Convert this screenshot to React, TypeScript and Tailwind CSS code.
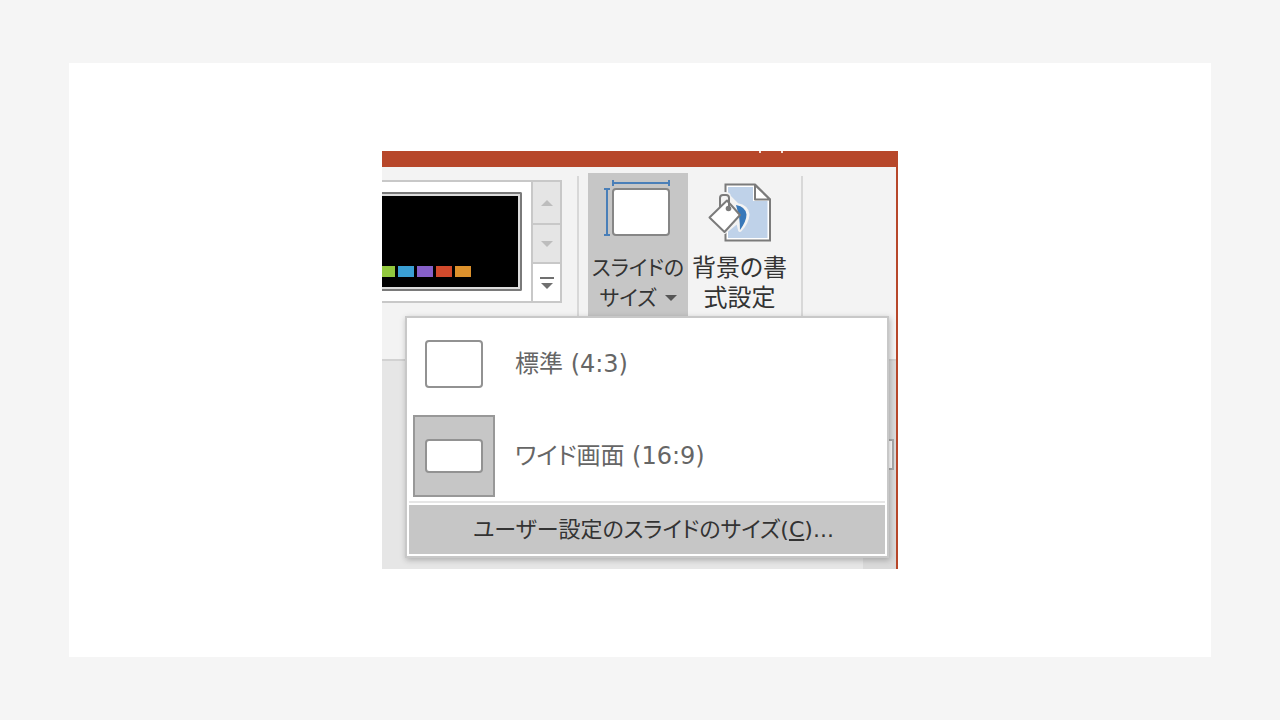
import type { ReactNode } from "react";

const swatches = ["bg-[#92c83e]", "bg-[#3a9fd4]", "bg-[#8660c9]", "bg-[#d24a2c]", "bg-[#dd912c]"];

function SlideSizeIcon() {
  return (
    <svg width="68" height="60" viewBox="0 0 68 60" fill="none" aria-hidden="true">
      <rect x="9" y="10" width="56" height="46" rx="3" fill="#fff" stroke="#868686" strokeWidth="2" />
      <path d="M9 4h56M9 1v6M65 1v6" stroke="#4a7fb8" strokeWidth="2" />
      <path d="M3 10v46M0 10h6M0 56h6" stroke="#4a7fb8" strokeWidth="2" />
    </svg>
  );
}

function FormatBackgroundIcon() {
  return (
    <svg width="64" height="60" viewBox="0 0 64 60" fill="none" aria-hidden="true">
      <path d="M17.5 1.5H47L62 16.5v41H17.5z" fill="#fff" stroke="#7b7b7b" strokeWidth="2" />
      <path d="M20 4h25v14h14.500v37H20z" fill="#bfd2e9" />
      <path d="M47 2v14.500h15z" fill="#fff" stroke="#7b7b7b" strokeWidth="2" strokeLinejoin="round" />
      {/* light halo keeps the bucket apart from the page */}
      <path
        d="M1 34.500L13 22v-8q0-3 4-3t4 3l8 8q10 2 10.500 9.500Q39 39 32 47l-2-9-13.500 11z"
        fill="#f3f3f3"
        stroke="#f3f3f3"
        strokeWidth="4"
        strokeLinejoin="round"
      />
      <path d="M28 22q10 2 10.500 9.500Q38.500 38 32 47q0-6-1-14z" fill="#3878b9" />
      <path d="M1.500 34.500L19 17.500l13 14.500-15.500 17z" fill="#fff" stroke="#7b7b7b" strokeWidth="2" strokeLinejoin="round" />
      <path d="M12 24V15q0-3 3-3h3q3 0 3 3v10" stroke="#7b7b7b" strokeWidth="2" />
      <circle cx="20.500" cy="25.500" r="2.800" fill="#7b7b7b" />
    </svg>
  );
}

function Arrow({ up = false, className }: { up?: boolean; className: string }) {
  return (
    <svg width="12" height="6" viewBox="0 0 12 6" className={className} aria-hidden="true">
      <path d={up ? "M0 6h12L6 0z" : "M0 0h12L6 6z"} fill="currentColor" />
    </svg>
  );
}

function ThemeGallery() {
  return (
    <div className="mt-[7px] flex h-[123px] min-w-0 flex-1 border-y-2 border-r-2 border-[#c8c8c8] bg-white">
      <div className="min-w-0 flex-1 py-2.5">
        <button
          type="button"
          aria-label="テーマ"
          className="flex h-[99px] w-[140px] rounded-r-[2px] border-y-2 border-r-2 border-[#7a7a7a] bg-[#dcdcdc] py-[2px] pr-[2px]"
        >
          <span className="flex h-full w-full items-end gap-[3px] overflow-hidden bg-black pb-2.5">
            {swatches.map((color, i) => (
              <span key={color} className={`h-[11px] ${i === 0 ? "w-[13px]" : "w-4"} ${color}`} />
            ))}
          </span>
        </button>
      </div>
      <div className="flex w-[29px] flex-col border-l-2 border-[#c8c8c8]">
        <button type="button" aria-label="上へ" className="flex h-[43px] items-center justify-center border-b-2 border-[#c8c8c8] bg-[#e5e5e5]">
          <Arrow up className="text-[#bdbdbd]" />
        </button>
        <button type="button" aria-label="下へ" className="flex h-[39px] items-center justify-center border-b-2 border-[#c8c8c8] bg-[#e5e5e5]">
          <Arrow className="text-[#bdbdbd]" />
        </button>
        <button type="button" aria-label="その他" className="flex flex-1 flex-col items-center justify-center gap-1">
          <span className="h-[2px] w-3.5 bg-[#707070]" />
          <Arrow className="text-[#707070]" />
        </button>
      </div>
    </div>
  );
}

function SizeOption({ label, selected = false, children }: { label: string; selected?: boolean; children: ReactNode }) {
  return (
    <button type="button" role="menuitemradio" aria-checked={selected} className="flex w-full items-center gap-5 px-1 text-left text-2xl text-[#666]">
      <span
        className={`flex size-[82px] shrink-0 items-center justify-center border-2 ${
          selected ? "border-[#989898] bg-[#c6c6c6]" : "border-transparent"
        }`}
      >
        {children}
      </span>
      <span className="whitespace-nowrap">{label}</span>
    </button>
  );
}

function SlideSizeMenu() {
  return (
    <div
      role="menu"
      className="absolute top-[149px] right-[7px] left-[23px] z-10 border-2 border-[#c8c8c8] bg-white p-[2px] shadow-[1px_2px_6px_rgba(0,0,0,0.25)]"
    >
      <div className="flex flex-col gap-2.5 pt-[3px] pb-1">
        <SizeOption label="標準 (4:3)">
          <span className="h-12 w-[58px] rounded-[4px] border-2 border-[#929292] bg-white" />
        </SizeOption>
        <SizeOption label="ワイド画面 (16:9)" selected>
          <span className="h-[34px] w-[58px] rounded-[4px] border-2 border-[#929292] bg-white" />
        </SizeOption>
      </div>
      <div className="mb-[2px] h-[2px] bg-[#e6e6e6]" />
      <button type="button" role="menuitem" className="flex h-[49px] w-full items-center bg-[#c6c6c6] pl-16 text-[22px] whitespace-nowrap text-[#333]">
        <span>
          ユーザー設定のスライドのサイズ(<span className="underline decoration-2 underline-offset-2">C</span>)...
        </span>
      </button>
    </div>
  );
}

export default function App() {
  return (
    <div className="flex min-h-screen bg-[#f5f5f5] px-[69px] py-[63px] font-['DejaVu_Sans','Noto_Sans_CJK_JP',sans-serif] [font-feature-settings:'palt']">
      <main className="flex flex-1 items-center justify-center bg-white">
        <div className="w-full max-w-[516px] overflow-hidden">
          <header className="flex h-4 justify-end gap-5 bg-[#b7472a] pr-[115px]">
            <span className="h-[2px] w-[2px] bg-[#f3dcd6]" />
            <span className="h-[2px] w-[2px] bg-[#f3dcd6]" />
          </header>

          <div className="relative border-r-2 border-[#b7472a]">
            <div className="flex border-b-2 border-[#d2d2d2] bg-[#f3f3f3] pt-1.5 pb-[43px]">
              <ThemeGallery />
              <div className="mt-[3px] ml-[15px] w-[2px] bg-[#d8d8d8]" />
              <button
                type="button"
                aria-haspopup="menu"
                aria-expanded="true"
                className="ml-[9px] flex w-[100px] flex-col items-center bg-[#c6c6c6] pt-1.5 pb-[3px] text-[21px] leading-[30px] text-[#333]"
              >
                <SlideSizeIcon />
                <span className="mt-3.5 whitespace-nowrap">スライドの</span>
                <span className="flex items-center gap-2 whitespace-nowrap">
                  サイズ
                  <Arrow className="text-[#555]" />
                </span>
              </button>
              <button type="button" className="flex w-[103px] flex-col items-center pt-2.5 pb-[3px] text-2xl leading-[30px] text-[#333]">
                <FormatBackgroundIcon />
                <span className="mt-2.5 whitespace-nowrap">背景の書</span>
                <span className="whitespace-nowrap">式設定</span>
              </button>
              <div className="mt-[3px] ml-2.5 w-[2px] bg-[#d8d8d8]" />
              <div className="w-[93px]" />
            </div>

            <div className="flex h-[208px] justify-end bg-[#e6e6e6]">
              <div className="w-[33px] bg-[#dadada] pt-[78px] pr-[2px]">
                <div className="h-[31px] border-2 border-[#ababab] bg-white" />
              </div>
            </div>

            <SlideSizeMenu />
          </div>
        </div>
      </main>
    </div>
  );
}
